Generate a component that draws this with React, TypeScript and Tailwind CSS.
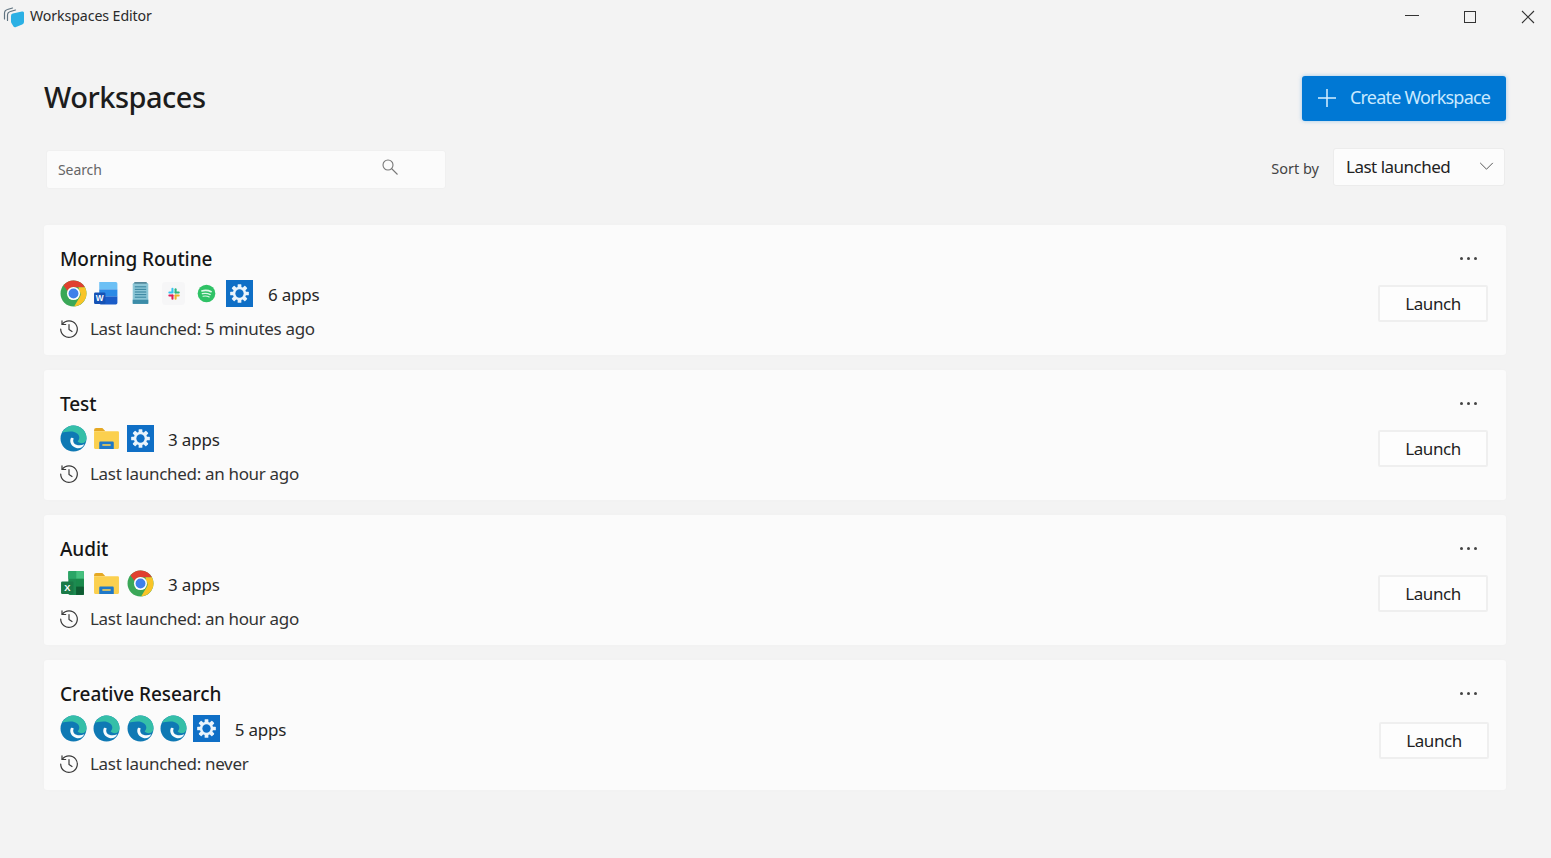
import React from "react";

type IconName = "chrome" | "word" | "notepad" | "slack" | "spotify" | "settings" | "edge" | "folder" | "excel";

function AppIcon({ name }: { name: IconName }) {
  const cls = "w-[27px] h-[27px] shrink-0";
  switch (name) {
    case "chrome":
      return (
        <svg viewBox="0 0 26 26" className={cls}>
          <circle cx="13" cy="13" r="12.5" fill="#3aa757" />
          <path d="M13 .5a12.5 12.5 0 0 1 11 6.5H13a6 6 0 0 0-5.6 3.9L3.4 5.2A12.5 12.5 0 0 1 13 .5z" fill="#e0402f" />
          <path d="M24 7a12.5 12.5 0 0 1-10.4 18.5l5-8.3A6 6 0 0 0 18.4 10l-.6-3z" fill="#f9c427" />
          <circle cx="13" cy="13" r="6.3" fill="#fff" />
          <circle cx="13" cy="13" r="4.8" fill="#3f80ea" />
        </svg>
      );
    case "word":
      return (
        <svg viewBox="0 0 26 26" className={cls}>
          <path d="M6 2h16a1.500 1.500 0 0 1 1.500 1.500V9H6z" fill="#6cc0f5" />
          <rect x="6" y="9" width="17.500" height="7" fill="#2b8ae6" />
          <path d="M6 16h17.500v6a1.500 1.500 0 0 1-1.500 1.500H7.500A1.500 1.500 0 0 1 6 22z" fill="#1a5cc8" />
          <rect x="1" y="12" width="11" height="11" rx="1.200" fill="#1552b5" />
          <text x="6.500" y="20.500" fontSize="8" fontWeight="700" fill="#fff" textAnchor="middle" fontFamily="'Liberation Sans', sans-serif">W</text>
        </svg>
      );
    case "notepad":
      return (
        <svg viewBox="0 0 26 26" className={cls}>
          <rect x="5.500" y="3" width="15" height="20" rx="1" fill="#8cc6d6" />
          <rect x="7" y="2" width="12" height="1.500" fill="#4a7f92" />
          <g fill="#3f8aa3">
            <rect x="7.500" y="6" width="11" height="1.100" />
            <rect x="7.500" y="8.500" width="11" height="1.100" />
            <rect x="7.500" y="11" width="11" height="1.100" />
            <rect x="7.500" y="13.500" width="11" height="1.100" />
            <rect x="7.500" y="16" width="11" height="1.100" />
          </g>
          <rect x="5.500" y="19" width="15" height="4" fill="#3c8ca8" />
        </svg>
      );
    case "slack":
      return (
        <svg viewBox="0 0 26 26" className={cls}>
          <rect x="2" y="2" width="22" height="22" rx="3" fill="#f6f6f7" />
          <rect x="11" y="7.500" width="2" height="5" rx="1" fill="#36c5f0" />
          <rect x="8" y="11" width="5" height="2" rx="1" fill="#36c5f0" />
          <rect x="14" y="8" width="2" height="5" rx="1" fill="#2eb67d" />
          <rect x="14" y="11" width="5" height="2" rx="1" fill="#2eb67d" />
          <rect x="14" y="14" width="5" height="2" rx="1" fill="#ecb22e" />
          <rect x="14" y="14" width="2" height="5" rx="1" fill="#ecb22e" />
          <rect x="8" y="14" width="5" height="2" rx="1" fill="#e01e5a" />
          <rect x="11" y="14" width="2" height="5" rx="1" fill="#e01e5a" />
        </svg>
      );
    case "spotify":
      return (
        <svg viewBox="0 0 26 26" className={cls}>
          <circle cx="13" cy="13" r="8.500" fill="#2fc266" />
          <g fill="none" stroke="#dff7e8" strokeLinecap="round">
            <path d="M8.500 10.500c3-.8 6.200-.6 9 .8" strokeWidth="1.500" />
            <path d="M9 13.200c2.600-.6 5.200-.4 7.600.8" strokeWidth="1.300" />
            <path d="M9.600 15.600c2.100-.4 4.200-.3 6 .7" strokeWidth="1.100" />
          </g>
        </svg>
      );
    case "settings":
      return (
        <svg viewBox="0 0 26 26" className={cls}>
          <rect width="26" height="26" fill="#0f6fc6" />
          <g transform="translate(13 13)" fill="#eaf4fb">
            {[0, 45, 90, 135].map((a) => (
              <rect key={a} x="-1.800" y="-9" width="3.600" height="18" rx=".6" transform={`rotate(${a})`} />
            ))}
            <circle r="6.400" />
          </g>
          <circle cx="13" cy="13" r="4" fill="#0f6fc6" />
        </svg>
      );
    case "edge":
      return (
        <svg viewBox="0 0 26 26" className={cls}>
          <circle cx="13" cy="13" r="12.500" fill="#0f79b4" />
          <path d="M2 7.500C4.500 3 8.500.5 13 .5c6.500 0 12.500 5 12.500 12 0 3.500-2.200 5-4.500 5-2 0-3.500-.7-4-1.800 1-1 1.600-2.200 1.600-3.700C18.600 8.500 14 6 10 6.300 6.500 6.500 3.800 7 2 7.500z" fill="#35bfa8" />
          <path d="M10.500 12.500c-1.800 3.500.3 8.700 6 9.800 3 .4 5.700-1 6.800-3.800-3 1.600-7.800 1.500-9.800-1-1-1.500-1-3-.3-4.500-1-1-2.100-1-2.700-.5z" fill="#f7fbfd" />
        </svg>
      );
    case "folder":
      return (
        <svg viewBox="0 0 26 26" className={cls}>
          <path d="M1 5a2 2 0 0 1 2-2h6l3 3h-11z" fill="#e5a823" />
          <path d="M1 6h23a1 1 0 0 1 1 1v15a1 1 0 0 1-1 1H2a1 1 0 0 1-1-1z" fill="#fbd04f" />
          <path d="M7 16h12a1 1 0 0 1 1 1v6H6v-6a1 1 0 0 1 1-1z" fill="#1f78c8" />
          <rect x="9" y="18.500" width="8" height="1.500" fill="#fbd04f" />
        </svg>
      );
    case "excel":
      return (
        <svg viewBox="0 0 26 26" className={cls}>
          <rect x="8" y="1" width="15" height="23" rx="1.500" fill="#1d8a50" />
          <rect x="15.500" y="1" width="7.500" height="7.500" fill="#45c07e" />
          <rect x="8" y="1" width="7.500" height="7.500" fill="#2aa566" />
          <rect x="15.500" y="8.500" width="7.500" height="7.500" fill="#1a8a4c" />
          <rect x="15.500" y="16" width="7.500" height="8" fill="#0e5c32" />
          <rect x="1" y="11" width="12" height="12" rx="1.200" fill="#1a7a47" />
          <text x="7" y="20" fontSize="9" fontWeight="700" fill="#fff" textAnchor="middle" fontFamily="'Liberation Sans', sans-serif">X</text>
        </svg>
      );
  }
}

function HistoryIcon() {
  return (
    <svg viewBox="0 0 20 20" className="w-[20px] h-[20px] shrink-0" fill="none" stroke="#3a3a3a" strokeWidth="1.200" strokeLinecap="round" strokeLinejoin="round">
      <path d="M3.300 5.200A8.300 8.300 0 1 1 1.700 10" />
      <path d="M3 1.800v3.700h3.700" />
      <path d="M10 5.500V10.500l3 2" />
    </svg>
  );
}

const rows: { title: string; icons: IconName[]; apps: string; last: string; low?: boolean }[] = [
  { title: "Morning Routine", icons: ["chrome", "word", "notepad", "slack", "spotify", "settings"], apps: "6 apps", last: "Last launched: 5 minutes ago" },
  { title: "Test", icons: ["edge", "folder", "settings"], apps: "3 apps", last: "Last launched: an hour ago" },
  { title: "Audit", icons: ["excel", "folder", "chrome"], apps: "3 apps", last: "Last launched: an hour ago" },
  { title: "Creative Research", icons: ["edge", "edge", "edge", "edge", "settings"], apps: "5 apps", last: "Last launched: never", low: true },
];

function Card({ title, icons, apps, last, low }: (typeof rows)[number]) {
  return (
    <div className="h-[130px] bg-[#fbfbfb] rounded-[3px] pl-[16px] pr-[18px] flex items-stretch justify-between shadow-[0_0_4px_rgba(0,0,0,0.015)]">
      <div className="flex flex-col pt-[20px]">
        <div className="text-[19px] leading-[28px] font-medium text-[#161616] tracking-[-0.08px]">{title}</div>
        <div className="flex items-center mt-[7px] h-[27px]">
          <div className="flex gap-[6.300px]">
            {icons.map((n, i) => (
              <AppIcon key={i} name={n} />
            ))}
          </div>
          <span className="ml-[14.500px] mt-[2px] text-[17px] text-[#262626] tracking-[-0.2px]">{apps}</span>
        </div>
        <div className="flex items-center mt-[10px] h-[24px]">
          <span className="-ml-px flex">
            <HistoryIcon />
          </span>
          <span className="ml-[11px] text-[17px] leading-[24px] text-[#333333] tracking-[-0.32px]">{last}</span>
        </div>
      </div>
      <div className="flex flex-col items-end pt-[18px]">
        <div className="mr-[11px] h-[30px] flex items-center gap-[4px]">
          <span className="w-[3px] h-[3px] rounded-full bg-[#444444]" />
          <span className="w-[3px] h-[3px] rounded-full bg-[#444444]" />
          <span className="w-[3px] h-[3px] rounded-full bg-[#444444]" />
        </div>
        <button
          className={
            low
              ? "mt-[14px] -mr-px w-[110px] h-[37px] bg-[#fdfdfd] border-2 border-[#efefef] rounded-[2px] text-[17px] text-[#1f1f1f] tracking-[-0.4px]"
              : "mt-[12px] w-[110px] h-[37px] bg-[#fdfdfd] border-2 border-[#efefef] rounded-[2px] text-[17px] text-[#1f1f1f] tracking-[-0.4px]"
          }
        >
          Launch
        </button>
      </div>
    </div>
  );
}

export default function App() {
  return (
    <div className="w-[1551px] h-[858px] overflow-hidden bg-[#f3f3f3] flex flex-col font-['Noto_Sans',_'Open_Sans',_sans-serif]">
      <div className="h-[34px] flex items-center justify-between shrink-0">
        <div className="flex items-center pl-[3px]">
          <svg viewBox="0 0 22 22" className="w-[22px] h-[22px] mt-[1px]">
            <g fill="none" stroke="#5f7380" strokeWidth="1.200" strokeLinecap="round">
              <path d="M1.500 13V7.500a4 4 0 0 1 3-4l5-1.500" />
              <path d="M4.500 14.500V9.500a4 4 0 0 1 3-4l5-1.500" />
            </g>
            <path d="M8 10a2.500 2.500 0 0 1 1.800-2.400L19 5.500a1.500 1.500 0 0 1 2 1.500v9a2.500 2.500 0 0 1-1.800 2.400L13 21a2 2 0 0 1-2.500-.5l-1.800-3a3 3 0 0 1-.7-2z" fill="#2bb0e4" />
          </svg>
          <span className="ml-[5px] mb-[2px] text-[14.200px] text-[#2a2a2a] tracking-[-0.1px]">Workspaces Editor</span>
        </div>
        <div className="flex items-center text-[#222222]">
          <div className="w-[58px] h-[34px] flex items-center justify-center">
            <span className="w-[14px] h-px bg-[#333333] mb-[3px]" />
          </div>
          <div className="w-[58px] h-[34px] flex items-center justify-center">
            <span className="w-[12px] h-[12px] border border-[#333333]" />
          </div>
          <div className="w-[52px] h-[34px] flex items-center justify-start pl-[22px]">
            <svg viewBox="0 0 14 14" className="w-[14px] h-[14px]" stroke="#333333" strokeWidth="1.100">
              <path d="M1 1l12 12M13 1L1 13" />
            </svg>
          </div>
        </div>
      </div>

      <div className="flex flex-col pl-[44px] pr-[45px]">
        <div className="flex items-center justify-between h-[45px] mt-[42px]">
          <h1 className="-mt-[3px] text-[29px] leading-[40px] font-medium text-[#1c1c1c] tracking-[-0.5px]">Workspaces</h1>
          <button className="w-[204px] h-[45px] bg-[#0078d4] rounded-[3px] flex items-center pl-[15px] shadow-[0_0_4px_rgba(0,120,212,0.35)]">
            <svg viewBox="0 0 20 20" className="w-[20px] h-[20px] -mt-[1px]" stroke="#d6efff" strokeWidth="1.500">
              <path d="M10 1v18M1 10h18" />
            </svg>
            <span className="ml-[13px] mb-[2px] text-[18px] text-[#c9e9ff] tracking-[-0.8px]">Create Workspace</span>
          </button>
        </div>

        <div className="flex items-center justify-between mt-[28px] h-[40px]">
          <div className="ml-[2px] w-[400px] h-[39px] bg-[#fbfbfb] border border-[#f0f0f0] rounded-[3px] flex items-center pl-[11px]">
            <span className="text-[14px] text-[#666666] tracking-[-0.1px]">Search</span>
            <svg viewBox="0 0 18 18" className="w-[18px] h-[18px] ml-[279px] -mt-[5px]" fill="none" stroke="#777777" strokeWidth="1.100">
              <circle cx="7" cy="7" r="5" />
              <path d="M10.500 10.500l6 6" />
            </svg>
          </div>
          <div className="flex items-center">
            <span className="text-[14.500px] text-[#444444]">Sort by</span>
            <div className="ml-[14px] mr-px w-[172px] h-[38px] -mt-[5px] bg-[#fcfcfc] border border-[#ececec] rounded-[3px] flex items-center justify-between pl-[12px] pr-[10px]">
              <span className="text-[17px] text-[#222222] tracking-[-0.5px]">Last launched</span>
              <svg viewBox="0 0 16 10" className="w-[15px] h-[9px]" fill="none" stroke="#555555" strokeWidth="1.100">
                <path d="M1 1l7 7 7-7" />
              </svg>
            </div>
          </div>
        </div>

        <div className="flex flex-col gap-[15px] mt-[36px]">
          {rows.map((r) => (
            <Card key={r.title} {...r} />
          ))}
        </div>
      </div>
    </div>
  );
}
